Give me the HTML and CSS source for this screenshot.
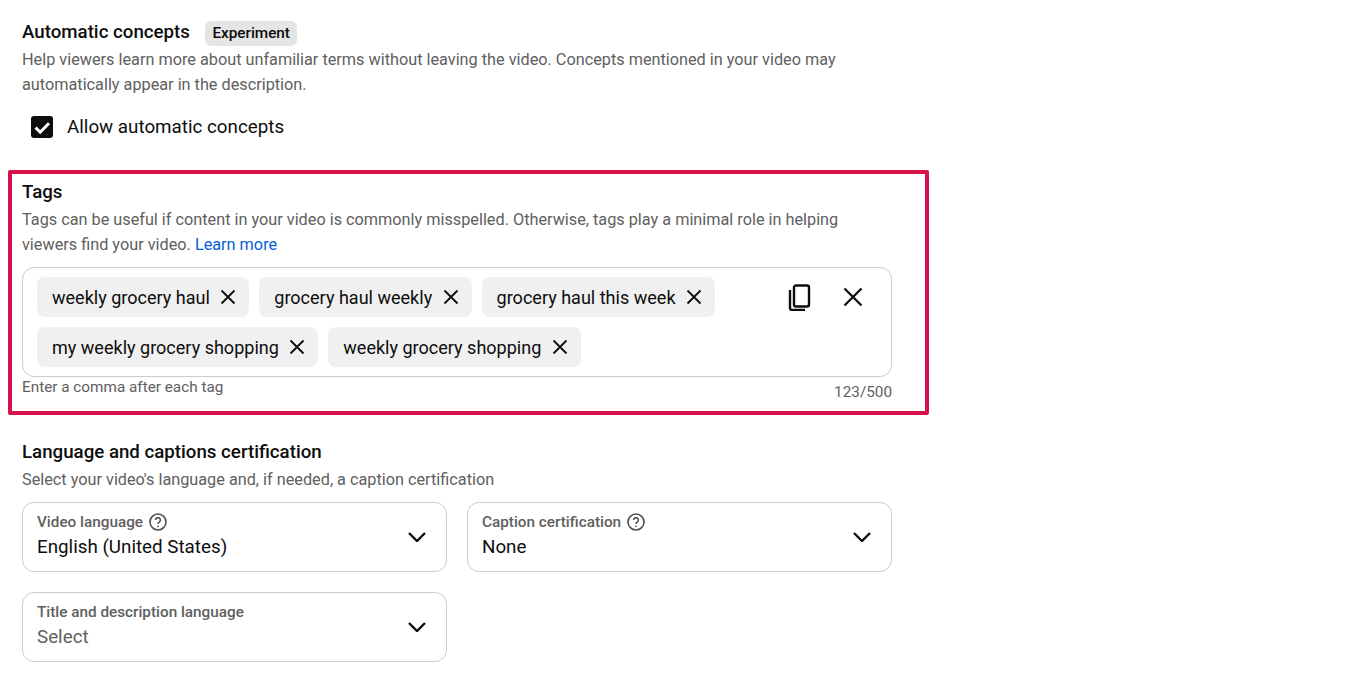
FILE: index.html
```html
<!DOCTYPE html>
<html lang="en">
<head>
<meta charset="utf-8">
<title>Video details</title>
<link rel="stylesheet" href="styles.css">
</head>
<body>
<main class="page">
  <section class="concepts">
    <div class="title-row">
      <h2 class="heading">Automatic concepts</h2>
      <span class="badge">Experiment</span>
    </div>
    <p class="desc">Help viewers learn more about unfamiliar terms without leaving the video. Concepts mentioned in your video may automatically appear in the description.</p>
    <label class="check-row">
      <span class="checkbox"><svg viewBox="0 0 22 22" width="22" height="22"><path d="M4.6 11.6l4.6 4.6 8.8-9" fill="none" stroke="#fff" stroke-width="3"/></svg></span>
      <span class="check-label">Allow automatic concepts</span>
    </label>
  </section>

  <section class="tags-box">
    <h2 class="heading">Tags</h2>
    <p class="desc">Tags can be useful if content in your video is commonly misspelled. Otherwise, tags play a minimal role in helping viewers find your video. <a class="link" href="#">Learn more</a></p>
    <div class="tag-input">
      <div class="chips">
        <span class="chip">weekly grocery haul<svg class="chip-x" viewBox="0 0 16 16" width="16" height="16"><path d="M1.5 1.5l13 13M14.5 1.5l-13 13"/></svg></span>
        <span class="chip">grocery haul weekly<svg class="chip-x" viewBox="0 0 16 16" width="16" height="16"><path d="M1.5 1.5l13 13M14.5 1.5l-13 13"/></svg></span>
        <span class="chip">grocery haul this week<svg class="chip-x" viewBox="0 0 16 16" width="16" height="16"><path d="M1.5 1.5l13 13M14.5 1.5l-13 13"/></svg></span>
        <span class="chip">my weekly grocery shopping<svg class="chip-x" viewBox="0 0 16 16" width="16" height="16"><path d="M1.5 1.5l13 13M14.5 1.5l-13 13"/></svg></span>
        <span class="chip">weekly grocery shopping<svg class="chip-x" viewBox="0 0 16 16" width="16" height="16"><path d="M1.5 1.5l13 13M14.5 1.5l-13 13"/></svg></span>
      </div>
      <div class="input-actions">
        <svg class="icon-copy" viewBox="0 0 24 28" width="24" height="28"><path d="M8 2.5h11a2 2 0 0 1 2 2v17a2 2 0 0 1-2 2H8a2 2 0 0 1-2-2v-17a2 2 0 0 1 2-2z"/><path d="M2 7v18a2 2 0 0 0 2 2h13"/></svg>
        <svg class="icon-clear" viewBox="0 0 20 20" width="20" height="20"><path d="M1.5 1.5l17 17M18.5 1.5l-17 17"/></svg>
      </div>
    </div>
    <div class="input-foot">
      <span class="hint">Enter a comma after each tag</span>
      <span class="count">123/500</span>
    </div>
  </section>

  <section class="language">
    <h2 class="heading">Language and captions certification</h2>
    <p class="desc">Select your video's language and, if needed, a caption certification</p>
    <div class="select-grid">
      <div class="select">
        <div class="select-text">
          <span class="select-label">Video language<svg class="help" viewBox="0 0 18 18" width="18" height="18"><circle cx="9" cy="9" r="8"/><path d="M6.6 7a2.4 2.4 0 1 1 3.6 2.1c-.8.5-1.2 1-1.2 1.9"/><circle class="help-dot" cx="9" cy="13.3" r=".9"/></svg></span>
          <span class="select-value">English (United States)</span>
        </div>
        <svg class="chevron" viewBox="0 0 18 10" width="18" height="10"><path d="M1 1l8 8 8-8"/></svg>
      </div>
      <div class="select">
        <div class="select-text">
          <span class="select-label">Caption certification<svg class="help" viewBox="0 0 18 18" width="18" height="18"><circle cx="9" cy="9" r="8"/><path d="M6.6 7a2.4 2.4 0 1 1 3.6 2.1c-.8.5-1.2 1-1.2 1.9"/><circle class="help-dot" cx="9" cy="13.3" r=".9"/></svg></span>
          <span class="select-value">None</span>
        </div>
        <svg class="chevron" viewBox="0 0 18 10" width="18" height="10"><path d="M1 1l8 8 8-8"/></svg>
      </div>
      <div class="select">
        <div class="select-text">
          <span class="select-label">Title and description language</span>
          <span class="select-value muted">Select</span>
        </div>
        <svg class="chevron" viewBox="0 0 18 10" width="18" height="10"><path d="M1 1l8 8 8-8"/></svg>
      </div>
    </div>
  </section>
</main>
</body>
</html>
```
FILE: styles.css
```css
* { box-sizing: border-box; }
html, body { margin: 0; padding: 0; background: #fff; overflow: hidden; }
body { font-family: Roboto, "Liberation Sans", sans-serif; color: #0d0d0d; height: 683px; }
.page { width: 870px; margin-left: 22px; padding-top: 20px; }
.heading { margin: 0; font-size: 18.7px; line-height: 24px; font-weight: 500; }
.desc { margin: 0; font-size: 16.25px; line-height: 25px; color: #606060; }
.title-row { display: flex; align-items: flex-start; gap: 15px; }
.badge { margin-top: 1px; background: #e5e5e5; border-radius: 6px; font-size: 15.3px; font-weight: 500; line-height: 25px; padding: 0 7.5px; }
.concepts .desc { margin-top: 1px; }
.check-row { display: flex; align-items: center; gap: 14px; margin: 18px 0 0 9px; }
.checkbox { width: 22px; height: 22px; background: #0d0d0d; border-radius: 3px; display: block; }
.checkbox svg { display: block; }
.check-label { font-size: 18.8px; line-height: 24px; }
.tags-box { width: 921px; height: 245px; margin: 31px 0 0 -14px; padding: 6px 33px 0 10px; border: 4px solid #d6124a; border-radius: 2px; }
.tags-box .desc { margin-top: 3px; }
.link { color: #065fd4; text-decoration: none; }
.tag-input { display: flex; justify-content: space-between; height: 110px; margin-top: 10px; padding: 9px 0 0 14px; border: 1px solid #ccc; border-radius: 12px; }
.chips { display: flex; flex-wrap: wrap; align-content: flex-start; gap: 10px; width: 700px; }
.chip { display: flex; align-items: center; height: 40px; padding: 0 13px 0 15px; gap: 10.4px; background: #f0f0f0; border-radius: 8px; font-size: 18.05px; }
.chip-x { stroke: #0d0d0d; stroke-width: 1.8; fill: none; }
.input-actions { display: flex; align-items: flex-start; gap: 31px; padding: 5px 28px 0 0; }
.icon-copy, .icon-clear { fill: none; stroke: #0d0d0d; display: block; }
.icon-copy { stroke-width: 2.4; margin-top: 1px; }
.icon-clear { stroke-width: 2.3; margin-top: 5px; }
.input-foot { display: flex; justify-content: space-between; font-size: 15.3px; line-height: 20px; color: #606060; }
.count { margin-top: 5px; }
.language { margin-top: 25px; }
.language .desc { margin-top: 3px; }
.select-grid { display: grid; grid-template-columns: 425px 425px; gap: 20px; margin-top: 10px; }
.select { display: flex; align-items: center; justify-content: space-between; height: 70px; padding: 0 20px 0 14px; border: 1px solid #ccc; border-radius: 12px; }
.select-text { display: flex; flex-direction: column; margin-top: -1px; }
.select-label { display: flex; align-items: center; gap: 6px; font-size: 15.3px; line-height: 20px; font-weight: 500; color: #606060; }
.select-value { margin-top: 1px; font-size: 18.8px; line-height: 28px; }
.muted { color: #606060; }
.help { fill: none; stroke: #505050; stroke-width: 1.6; }
.help-dot { fill: #505050; stroke: none; }
.chevron { fill: none; stroke: #0d0d0d; stroke-width: 2.4; }
```
